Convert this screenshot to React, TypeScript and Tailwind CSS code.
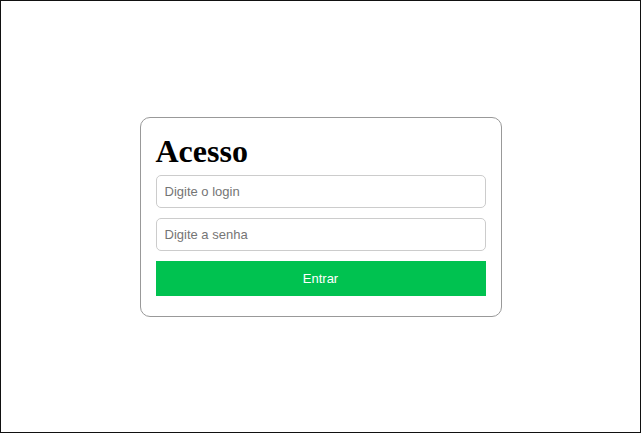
import React from 'react';

const fieldClass =
  "h-[33px] w-full rounded-[5px] border border-[#ccc] px-[8px] font-['Liberation_Sans',Arial,sans-serif] text-[13px] text-black outline-none placeholder:text-[#757575]";

export default function App() {
  return (
    <div className="flex h-[433px] w-full items-center justify-center border border-[#111] bg-white">
      <form
        className="flex w-[362px] flex-col gap-[10px] rounded-[10px] border border-[#999] bg-white px-[15px] pt-[15px] pb-[20px]"
        onSubmit={(e) => e.preventDefault()}
      >
        <h1 className="-mb-[5px] font-['Liberation_Serif',serif] text-[32px] leading-[37px] font-bold text-black">
          Acesso
        </h1>
        <input type="text" placeholder="Digite o login" className={fieldClass} />
        <input type="password" placeholder="Digite a senha" className={fieldClass} />
        <button
          type="submit"
          className="h-[35px] w-full bg-[#00c250] pt-[1px] font-['Liberation_Sans',Arial,sans-serif] text-[13px] text-white"
        >
          Entrar
        </button>
      </form>
    </div>
  );
}
